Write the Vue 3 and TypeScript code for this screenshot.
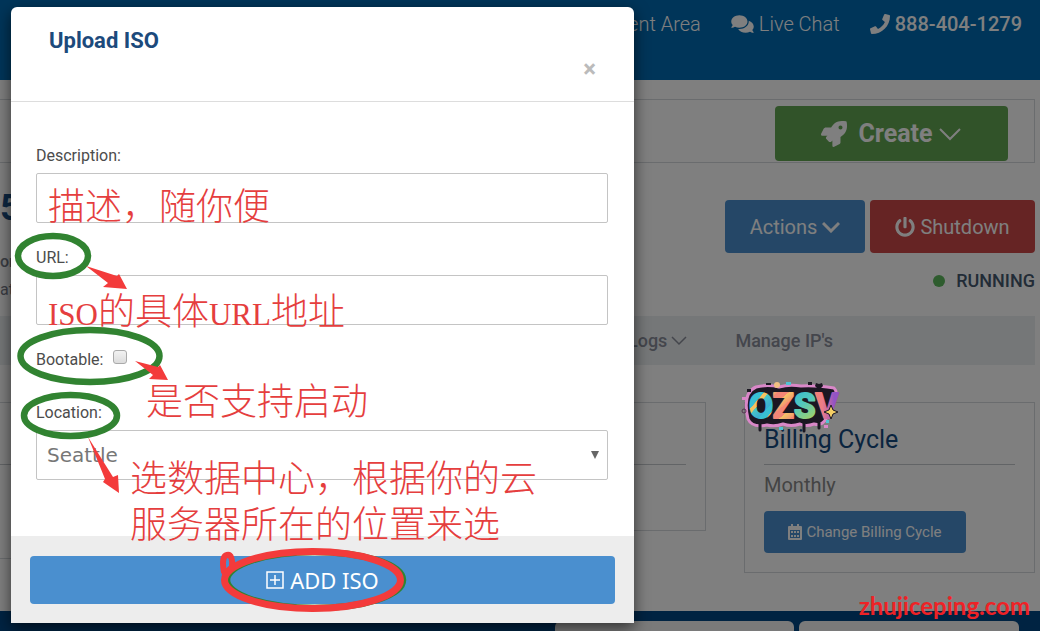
<script setup lang="ts">
import { ref } from 'vue'

const description = ref('')
const url = ref('')
const bootable = ref(false)
const location = ref('Seattle')
const locations: string[] = ['Seattle']
</script>

<template>
  <div class="screen">
    <div class="page">
      <header class="topbar">
        <a href="#">Client Area</a>
        <a href="#">
          <svg width="23" height="20" viewBox="0 0 576 512"><path fill="currentColor" d="M416 192c0-88.4-93.1-160-208-160S0 103.6 0 192c0 34.3 14.1 65.9 38 92-13.4 30.2-35.5 54.2-35.8 54.5-2.2 2.3-2.8 5.7-1.5 8.7S4.800 352 8 352c36.600 0 66.900-12.300 88.700-25 32.200 15.700 70.300 25 111.300 25 114.900 0 208-71.600 208-160zm122 220c23.900-26 38-57.700 38-92 0-66.900-53.500-124.200-129.300-148.100.9 6.600 1.300 13.300 1.300 20.100 0 105.900-107.700 192-240 192-10.800 0-21.300-.8-31.700-1.900C207.800 439.600 281.800 480 368 480c41 0 79.100-9.200 111.300-25 21.800 12.700 52.100 25 88.700 25 3.200 0 6.100-1.900 7.300-4.800 1.300-2.900.7-6.300-1.500-8.700-.3-.3-22.400-24.200-35.800-54.500z" /></svg>
          Live Chat
        </a>
        <a href="#" class="phone">
          <svg width="20" height="20" viewBox="0 0 512 512"><path fill="currentColor" d="M493.400 24.600l-104-24c-11.300-2.600-22.900 3.300-27.500 13.900l-48 112c-4.200 9.800-1.400 21.300 6.900 28l60.600 49.600c-36 76.700-98.900 140.500-177.200 177.200l-49.600-60.600c-6.800-8.300-18.200-11.100-28-6.900l-112 48C3.900 366.500-2 378.100.6 389.400l24 104C27.100 504.200 36.700 512 48 512c256.100 0 464-207.500 464-464 0-11.200-7.700-20.900-18.600-23.400z" /></svg>
          888-404-1279
        </a>
      </header>

      <main class="content">
        <section class="create-bar">
          <button type="button" class="btn create">
            <svg class="rocket" width="26" height="26" viewBox="0 0 512 512"><path fill="currentColor" d="M505.120 19.094c-1.189-5.531-6.658-11-12.207-12.188C460.716 0 435.507 0 410.407 0 307.175 0 245.269 55.203 199.052 128H94.838c-16.348.016-35.557 11.875-42.887 26.484L2.516 253.297A28.400 28.400 0 0 0 0 264a24 24 0 0 0 24 24h103.816l-22.474 22.469c-11.366 11.361-12.996 32.258 0 45.250l50.904 50.906c11.156 11.188 32.156 13.156 45.277 0l22.475-22.469V488a24 24 0 0 0 24 24 28.560 28.560 0 0 0 10.707-2.516l98.728-49.390c14.629-7.297 26.508-26.500 26.508-42.860V312.797c72.598-46.313 128.035-108.406 128.035-211.094.1-25.203.1-50.406-6.856-82.609zM384.040 168a40 40 0 1 1 40-40 40 40 0 0 1-40 40z" /></svg>
            Create
            <svg width="24" height="16" viewBox="0 0 24 16"><path d="M2 3l10 10L22 3" fill="none" stroke="currentColor" stroke-width="2" /></svg>
          </button>
        </section>

        <section class="server">
          <div class="server-info">
            <h1>5</h1>
            <p class="strong">on</p>
            <p>at</p>
          </div>
          <div class="server-side">
            <div class="server-actions">
              <button type="button" class="btn actions">
                Actions
                <svg width="18" height="12" viewBox="0 0 18 12"><path d="M1 2l8 8 8-8" fill="none" stroke="currentColor" stroke-width="3" /></svg>
              </button>
              <button type="button" class="btn shutdown">
                <svg width="20" height="20" viewBox="0 0 512 512"><path fill="currentColor" d="M400 54.100c63 45 104 118.600 104 201.900 0 136.800-110.800 247.700-247.500 248C120 504.300 8.200 393 8 256.400 7.900 173.100 48.900 99.300 111.800 54.200c11.700-8.300 28-4.800 35 7.700L162.600 90c5.900 10.500 3.100 23.800-6.600 31-41.500 30.800-68 79.600-68 134.900-.1 92.300 74.500 168.100 168 168.100 91.600 0 168.600-74.200 168-169.100-.3-51.800-24.700-101.800-68.100-134-9.700-7.200-12.400-20.500-6.500-30.900l15.800-28.100c7-12.400 23.200-16.100 34.800-7.800zM296 264V24c0-13.300-10.700-24-24-24h-32c-13.300 0-24 10.700-24 24v240c0 13.300 10.700 24 24 24h32c13.300 0 24-10.700 24-24z" /></svg>
                Shutdown
              </button>
            </div>
            <p class="status"><span class="dot"></span>RUNNING</p>
          </div>
        </section>

        <nav class="tabs">
          <a href="#">Logs
            <svg width="16" height="10" viewBox="0 0 16 10"><path d="M1 1l7 7 7-7" fill="none" stroke="currentColor" stroke-width="1.500" /></svg>
          </a>
          <a href="#" class="ips">Manage IP's</a>
        </nav>

        <section class="cards">
          <article class="card first"><div class="rule"></div></article>
          <article class="card second"><div class="rule"></div></article>
          <article class="card billing">
            <h2>Billing Cycle</h2>
            <p>Monthly</p>
            <button type="button" class="btn change">
              <svg width="14" height="16" viewBox="0 0 14 16"><path fill="currentColor" fill-rule="evenodd" d="M3 0h2v2h4V0h2v2h2q1 0 1 1v12q0 1-1 1H1q-1 0-1-1V3q0-1 1-1h2zM2 6v8h10V6zM3 7h2v2H3zM6 7h2v2H6zM9 7h2v2H9zM3 11h2v2H3zM6 11h2v2H6zM9 11h2v2H9z" /></svg>
              Change Billing Cycle
            </button>
          </article>
        </section>
      </main>

      <footer class="bottom">
        <div class="panel wide"></div>
        <div class="panel"></div>
      </footer>
    </div>

    <div class="backdrop">
      <form class="modal" role="dialog" aria-labelledby="modal-title" @submit.prevent>
        <div class="modal-head">
          <h2 id="modal-title">Upload ISO</h2>
          <button type="button" class="close" aria-label="Close">×</button>
        </div>
        <div class="modal-body">
          <label for="description">Description:</label>
          <input id="description" v-model="description" class="field" type="text">
          <label for="url">URL:</label>
          <input id="url" v-model="url" class="field" type="text">
          <div class="check-row">
            <label for="bootable">Bootable:</label>
            <input id="bootable" v-model="bootable" type="checkbox">
          </div>
          <label for="location">Location:</label>
          <div class="select-wrap">
            <select id="location" v-model="location" class="field">
              <option v-for="item in locations" :key="item">{{ item }}</option>
            </select>
            <svg width="8" height="8" viewBox="0 0 8 8"><path d="M0 0h8L4 8z" fill="#666" /></svg>
          </div>
        </div>
        <div class="modal-foot">
          <button type="submit" class="btn submit">
            <svg width="18" height="18" viewBox="0 0 18 18"><path d="M1 1h16v16H1zM9 4v10M4 9h10" fill="none" stroke="currentColor" stroke-width="1.500" /></svg>
            ADD ISO
          </button>
        </div>
      </form>
    </div>

    <div class="notes">
      <svg class="marks" width="1040" height="631" viewBox="0 0 1040 631">
        <g fill="none" stroke="#318331" stroke-width="6.500">
          <ellipse cx="53" cy="256" rx="35" ry="20" />
          <ellipse cx="90" cy="356" rx="69.500" ry="26" />
          <ellipse cx="70.500" cy="415.500" rx="46.500" ry="20.500" />
          <ellipse cx="315" cy="580" rx="88" ry="28" />
        </g>
        <ellipse cx="312.500" cy="580" rx="88" ry="28.500" fill="none" stroke="#f33b3b" stroke-width="7" />
        <path d="M224 572c-2-10-1-16 3-17s6 5 5 12l-7 7" fill="none" stroke="#f33b3b" stroke-width="6" stroke-linecap="round" stroke-linejoin="round" />
        <g fill="#f33b3b">
          <path d="M86 266l31 10 2-2 8 15-24-2 5-4z" />
          <path d="M135 361l23 6 2-2 8 15-19-1 4-4z" />
          <path d="M88 437l25 40 5-2 1 18-16-11 2-3z" />
        </g>

        <defs>
          <linearGradient id="paint" x1="0" y1="0" x2="14" y2="12" gradientUnits="userSpaceOnUse" spreadMethod="repeat">
            <stop offset="0" stop-color="#38bfd2" />
            <stop offset=".3" stop-color="#38bfd2" />
            <stop offset=".32" stop-color="#f4c160" />
            <stop offset=".5" stop-color="#f4c160" />
            <stop offset=".52" stop-color="#48c5c8" />
            <stop offset="1" stop-color="#3aaed2" />
          </linearGradient>
          <linearGradient id="peach" x1="0" y1="0" x2="9" y2="11" gradientUnits="userSpaceOnUse" spreadMethod="repeat">
            <stop offset="0" stop-color="#f38676" />
            <stop offset=".5" stop-color="#f38676" />
            <stop offset=".52" stop-color="#f5c466" />
            <stop offset="1" stop-color="#f29a70" />
          </linearGradient>
          <linearGradient id="mint" x1="790" y1="392" x2="808" y2="420" gradientUnits="userSpaceOnUse">
            <stop offset="0" stop-color="#36b9cf" />
            <stop offset=".5" stop-color="#52c9bd" />
            <stop offset="1" stop-color="#9bd070" />
          </linearGradient>
          <linearGradient id="violet" x1="811" y1="0" x2="834" y2="0" gradientUnits="userSpaceOnUse">
            <stop offset="0" stop-color="#f48466" />
            <stop offset=".5" stop-color="#ed7c86" />
            <stop offset="1" stop-color="#9353c5" />
          </linearGradient>
        </defs>
        <path d="M756 387q12-3 23 0 10-3 22-1 14-1 33 2 4 4 1 11l-9 20q-4 7-12 5-8 3-14 0-9 3-17 0-8 3-16 1-15 3-19-6-6-26 8-32z" fill="#1b1722" stroke="#d987c8" stroke-width="3" stroke-linejoin="round" />
        <path d="M760 421v9M804 422v9M819 423v5" stroke="#1b1722" stroke-width="3" stroke-linecap="round" />
        <text class="tag" x="749" y="418"><tspan fill="url(#paint)" stroke="url(#paint)">O</tspan><tspan fill="url(#peach)" stroke="url(#peach)">Z</tspan><tspan fill="url(#mint)" stroke="url(#mint)">S</tspan><tspan fill="url(#violet)" stroke="url(#violet)">V</tspan></text>
        <path d="M831 405l2 5 5 2-5 2-2 5-2-5-5-2 5-2z" fill="#f5cf65" stroke="#1b1722" />
        <circle cx="777" cy="385" r="3" fill="#f2c183" />
        <path d="M786 382h5v3h-5zM779 427h4v3h-4zM826 420h3v3h-3z" fill="#51c3d4" />
        <path d="M747 389h4v3h-4zM766 383h5v2h-5zM808 382h4v3h-4zM816 383l3 1 3-1 1 3-4 4-4-4z" fill="#1b1722" />
        <path d="M742 397h4v3h-4zM824 425h4v3h-4z" fill="#d987c8" />
        <circle cx="744" cy="411" r="2" fill="none" stroke="#54334f" />
      </svg>
      <p class="note describe">描述，随你便</p>
      <p class="note address"><span>ISO</span>的具体<span>URL</span>地址</p>
      <p class="note boot">是否支持启动</p>
      <p class="note place">选数据中心，根据你的云<br>服务器所在的位置来选</p>
      <p class="watermark">zhujiceping.com</p>
    </div>
  </div>
</template>

<style>
html, body { margin: 0; }
</style>

<style scoped>
* { box-sizing: border-box; }
h1, h2, p { margin: 0; font-weight: 400; }
svg { display: block; flex: none; }
a { color: inherit; text-decoration: none; }
.screen {
  position: relative;
  min-height: 100vh;
  overflow: hidden;
  font-family: Roboto, "Liberation Sans", sans-serif;
}
.page {
  display: flex;
  flex-direction: column;
  min-height: 100vh;
  background: #fff;
}
.topbar {
  display: flex;
  justify-content: flex-end;
  gap: 30px;
  height: 80px;
  padding: 12px 18px 0 0;
  background: #006ab2;
  color: #fff;
  font-size: 20px;
  font-weight: 300;
  line-height: 24px;
}
.topbar a { display: flex; align-items: center; gap: 5px; height: 24px; }
.topbar .phone { font-weight: 500; }
.btn {
  display: flex;
  align-items: center;
  justify-content: center;
  gap: 5px;
  padding: 0;
  border: 0;
  border-radius: 4px;
  background: #4a8fcf;
  color: #fff;
  font-family: inherit;
  font-size: 20px;
}
.content { padding: 19px 5px 0 0; }
.create-bar {
  display: flex;
  justify-content: flex-end;
  height: 64px;
  padding: 6px 26px 0 0;
  border: 1px solid #d5d9dc;
  border-left: 0;
}
.create { width: 233px; height: 55px; background: #62a652; font-size: 25px; font-weight: 700; }
.rocket { margin-right: 6px; }
.server { display: flex; justify-content: space-between; margin-top: 37px; height: 116px; }
.server-info { color: #777b88; font-size: 16px; line-height: 28px; }
.server-info h1 { margin-bottom: 32px; color: #1a4f85; font-size: 36px; font-weight: 700; line-height: 16px; }
.server-info .strong { font-weight: 500; }
.server-actions { display: flex; gap: 5px; }
.actions { width: 140px; height: 53px; }
.shutdown { width: 165px; height: 53px; background: #cc4848; }
.status {
  display: flex;
  justify-content: flex-end;
  align-items: center;
  gap: 11px;
  margin-top: 16px;
  color: #45586e;
  font-size: 18px;
  font-weight: 500;
  line-height: 24px;
}
.dot { width: 12px; height: 12px; border-radius: 50%; background: #5cb85c; }
.tabs {
  display: flex;
  justify-content: flex-end;
  gap: 48px;
  height: 49px;
  padding-right: 202px;
  background: #ebeef1;
  color: #888c99;
  font-size: 18px;
  font-weight: 500;
}
.tabs a { display: flex; align-items: center; gap: 4px; }
.cards {
  display: grid;
  grid-template-columns: 3fr 4fr 291px;
  align-items: start;
  gap: 38px;
  margin-top: 37px;
}
.card { border: 1px solid #d5d9dc; padding: 0 19px; }
.rule { height: 62px; border-bottom: 1px solid #c5c9cc; }
.first { height: 157px; border-left: 0; padding-left: 0; }
.second { height: 129px; }
.billing { height: 171px; }
.billing h2 {
  height: 62px;
  padding-top: 23px;
  border-bottom: 1px solid #c5c9cc;
  color: #154a80;
  font-size: 25px;
  line-height: 28px;
}
.billing p { margin: 8px 0 14px; color: #888; font-size: 20px; line-height: 24px; }
.change { gap: 4px; width: 202px; height: 42px; font-size: 15px; }
.bottom {
  display: flex;
  align-items: flex-end;
  justify-content: flex-end;
  gap: 5px;
  flex: none;
  height: 20px;
  margin-top: auto;
  padding-right: 21px;
  background: #004684;
}
.panel { width: 220px; height: 10px; border-radius: 6px 6px 0 0; background: #f4f4f4; }
.panel.wide { width: 239px; }
.backdrop {
  position: absolute;
  inset: 0;
  padding: 7px 0 0 11px;
  background: rgba(0, 0, 0, .5);
}
.modal {
  width: 60vw;
  max-width: 623px;
  border-radius: 6px 6px 0 0;
  background: #fff;
  box-shadow: 0 5px 15px rgba(0, 0, 0, .6);
}
.modal-head {
  display: flex;
  flex-direction: column;
  height: 95px;
  padding: 20px 38px 0;
  border-bottom: 1px solid #ddd;
}
.modal-head h2 { color: #1c4a7c; font-size: 22px; font-weight: 700; line-height: 28px; }
.close {
  align-self: flex-end;
  padding: 0;
  border: 0;
  background: none;
  color: #bbb;
  font-family: inherit;
  font-size: 24px;
  font-weight: 700;
  line-height: 28px;
}
.modal-body { padding: 42px 26px 56px 25px; color: #4c4c4c; font-size: 16px; line-height: 24px; }
.modal-body label { display: block; }
.field {
  display: block;
  width: 100%;
  height: 50px;
  margin: 5px 0 23px;
  padding: 0 10px;
  border: 1px solid #c4c4c4;
  border-radius: 2px;
  background: #fff;
  color: #777;
  font-family: "DejaVu Sans", sans-serif;
  font-size: 20px;
}
.check-row { display: flex; gap: 10px; margin-bottom: 29px; }
.check-row input {
  appearance: none;
  width: 14px;
  height: 14px;
  margin: 2px 0 0;
  border: 1px solid #aaa;
  border-radius: 3px;
  background: linear-gradient(#f2f2f2, #dcdcdc);
}
.select-wrap { position: relative; }
.select-wrap .field { appearance: none; margin-bottom: 0; }
.select-wrap svg { position: absolute; top: 21px; right: 9px; pointer-events: none; }
.modal-foot { padding: 20px 19px 19px; background: #ededed; }
.submit { width: 100%; height: 48px; gap: 6px; font-family: "Noto Sans", sans-serif; font-size: 22px; }
.notes { position: absolute; inset: 0; pointer-events: none; }
.marks { position: absolute; top: 0; left: 0; }
.tag {
  font-family: Roboto, sans-serif;
  font-size: 35px;
  font-weight: 700;
  stroke-width: 2px;
  stroke-linejoin: round;
}
.note {
  position: absolute;
  color: #e53e3e;
  font-family: "Noto Sans CJK SC", sans-serif;
  font-size: 37px;
  font-weight: 300;
  line-height: 46px;
  white-space: nowrap;
}
.note span { font-family: "Liberation Serif", serif; font-size: 31px; }
.describe { top: 181px; left: 48px; }
.address { top: 286px; left: 48px; }
.boot { top: 376px; left: 146px; }
.place { top: 453px; left: 130px; }
.watermark {
  position: absolute;
  right: 10px;
  bottom: 9px;
  color: #ee2226;
  font-family: Lato, sans-serif;
  font-size: 24px;
  font-weight: 700;
  line-height: 32px;
}
</style>
